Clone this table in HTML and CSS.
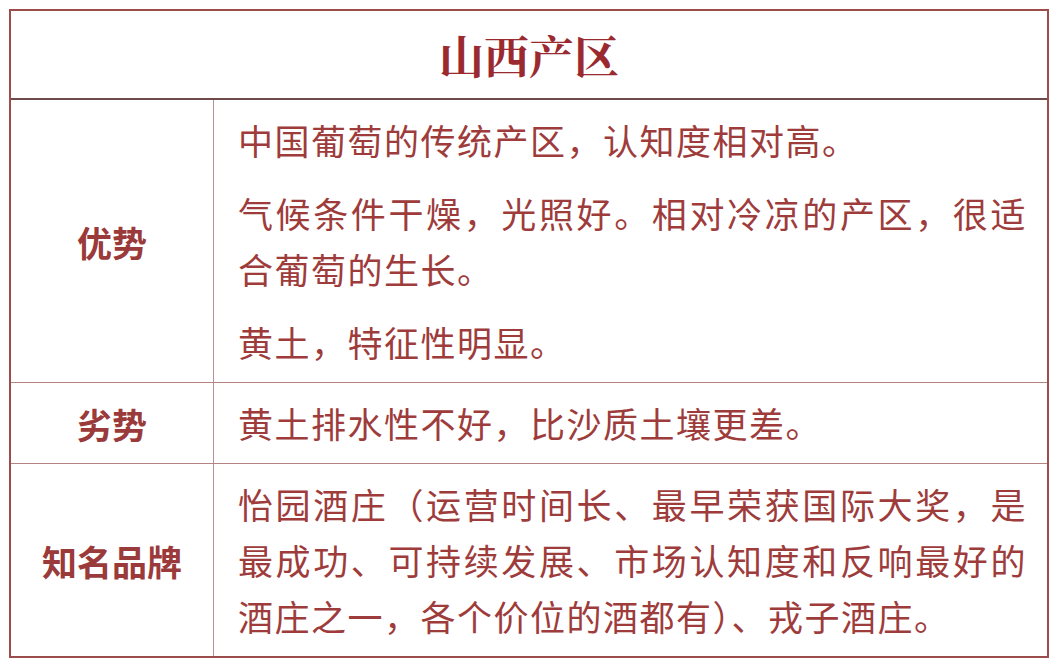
FILE: index.html
```html
<!DOCTYPE html>
<html lang="zh-CN">
<head>
<meta charset="utf-8">
<title>山西产区</title>
<link rel="stylesheet" href="styles.css">
</head>
<body>
<div class="page">
  <div class="table">
    <div class="title">山西产区</div>
    <div class="row row-adv">
      <div class="label">优势</div>
      <div class="content">
        <p>中国葡萄的传统产区，认知度相对高。</p>
        <p>气候条件干燥，光照好。相对冷凉的产区，很适合葡萄的生长。</p>
        <p>黄土，特征性明显。</p>
      </div>
    </div>
    <div class="row row-dis">
      <div class="label">劣势</div>
      <div class="content">
        <p>黄土排水性不好，比沙质土壤更差。</p>
      </div>
    </div>
    <div class="row row-brand">
      <div class="label">知名品牌</div>
      <div class="content">
        <p>怡园酒庄（运营时间长、最早荣获国际大奖，是最成功、可持续发展、市场认知度和反响最好的酒庄之一，各个价位的酒都有）、戎子酒庄。</p>
      </div>
    </div>
  </div>
</div>
</body>
</html>
```

FILE: styles.css
```css
html, body {
  margin: 0;
  padding: 0;
  background: #ffffff;
}

.page {
  padding: 9px 9px 0 9px;
}

.table {
  border: 2px solid #9d4c4c;
  color: #9e3c3c;
  font-family: "Noto Sans CJK SC", "Noto Sans", sans-serif;
}

.title {
  height: 87px;
  display: flex;
  align-items: center;
  justify-content: center;
  border-bottom: 2px solid #6f4a4a;
  font-family: "Noto Serif CJK SC", "Noto Sans CJK SC", serif;
  font-weight: 700;
  font-size: 45px;
  color: #9b2a30;
  letter-spacing: 0;
}

.row {
  display: grid;
  grid-template-columns: 202px 1fr;
}

.row + .row {
  border-top: 1px solid #b48484;
}

.label {
  display: flex;
  align-items: center;
  justify-content: center;
  font-weight: 700;
  font-size: 35px;
  color: #9a3a3a;
}

.content {
  border-left: 1px solid #b89292;
  padding: 12px 20px 12px 24px;
  font-size: 35px;
  line-height: 56px;
  letter-spacing: 1.5px;
  text-align: justify;
}

.content p {
  margin: 0;
}

.content p + p {
  margin-top: 17px;
}
```
